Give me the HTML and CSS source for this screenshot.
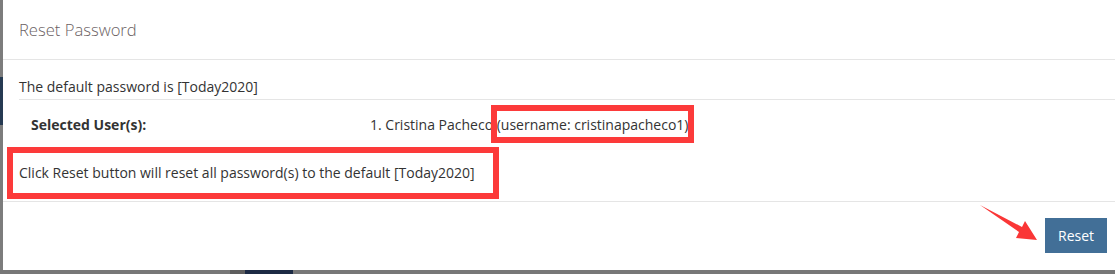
FILE: index.html
```html
<!DOCTYPE html>
<html lang="en">

<head>
    <meta name="viewport" content="width=device-width, initial-scale=1.0" />
    <title>Reset Password</title>
    <link rel="stylesheet" href="styles.css">
</head>

<body>
    <div class="backdrop">
        <div class="side-strip">
            <span class="strip-dark"></span>
        </div>

        <div class="modal">
            <div class="modal-header">
                <h4 class="modal-title">Reset Password</h4>
            </div>

            <div class="modal-body">
                <div class="intro">The default password is [Today2020]</div>

                <div class="user-row">
                    <div class="user-label">Selected User(s):</div>
                    <div class="user-value">1. Cristina Pacheco <span class="mark">(username: cristinapacheco1)</span></div>
                </div>

                <div class="notice">Click Reset button will reset all password(s) to the default [Today2020]</div>
            </div>

            <div class="modal-footer">
                <button type="button" class="btn-reset">Reset</button>
            </div>

            <!-- annotation arrow -->
            <svg class="arrow" width="64" height="44" viewBox="976 200 64 44">
                <polygon points="980,205 1022,227 1025,221 1037,240 1016,238 1019,232" fill="#fa3636" />
            </svg>
        </div>

        <div class="bottom-strip">
            <span class="bs-a"></span>
            <span class="bs-b"></span>
        </div>
    </div>
</body>

</html>
```

FILE: styles.css
```css
body {
    margin: 0;
    font-family: "Open Sans", "Noto Sans", sans-serif;
    font-size: 14px;
    color: #333;
    background-color: #787878;
}

.backdrop {
    position: relative;
    width: 1115px;
    height: 274px;
    overflow: hidden;
    display: grid;
    grid-template-columns: 3px 1fr;
    grid-template-rows: 270px 4px;
}

.side-strip {
    background-color: #7c7c7c;
    display: flex;
    flex-direction: column;
    padding-top: 77px;
}

.strip-dark {
    display: block;
    height: 48px;
    background-color: #263a52;
}

.modal {
    position: relative;
    background-color: #fff;
    display: flex;
    flex-direction: column;
}

.modal-header {
    height: 59px;
    border-bottom: 1px solid #e5e5e5;
    display: flex;
    align-items: center;
    padding: 0 16px;
}

.modal-title {
    margin: 0;
    font-size: 16.6px;
    font-weight: 300;
    color: #6b5f63;
}

.modal-body {
    padding-left: 16px;
}

.intro {
    line-height: 20px;
    padding: 17px 0 2px;
    border-bottom: 1px solid #e5e5e5;
}

.user-row {
    display: grid;
    grid-template-columns: 339px 1fr;
    padding: 15px 0 12px 12px;
    line-height: 20px;
}

.user-label {
    font-weight: bold;
}

.mark {
    padding: 4px 0 3px;
    outline: 6px solid #fc3a3a;
}

.notice {
    width: fit-content;
    margin-left: -12px;
    margin-bottom: 2px;
    padding: 10px 18px 10px 6px;
    line-height: 20px;
    border: 6px solid #fc3a3a;
}

.modal-footer {
    flex: 1;
    border-top: 1px solid #e5e5e5;
    display: flex;
    justify-content: flex-end;
    align-items: flex-start;
    padding: 16px 8px 0 0;
}

.btn-reset {
    width: 62px;
    height: 35px;
    border: none;
    background-color: #426f97;
    color: #fff;
    font-family: inherit;
    font-size: 14px;
}

.arrow {
    position: absolute;
    left: 973px;
    top: 200px;
}

.bottom-strip {
    grid-column: 1 / 3;
    display: flex;
    background-color: #777;
    padding-left: 230px;
}

.bs-a {
    width: 15px;
    background-color: #5e5e5e;
}

.bs-b {
    width: 48px;
    background-color: #1c2a44;
}
```
